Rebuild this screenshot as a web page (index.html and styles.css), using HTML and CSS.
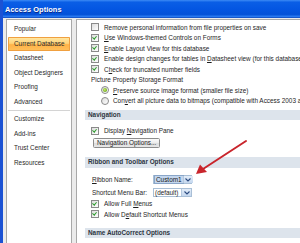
FILE: index.html
```html
<!DOCTYPE html>
<html>
<head>
<meta charset="utf-8">
<link rel="stylesheet" href="styles.css">
</head>
<body>
<div class="window">
  <div class="titlebar"><span class="title">Access Options</span></div>
  <div class="frame">
    <div class="nav">
      <div class="nav-item">Popular</div>
      <div class="nav-item selected">Current Database</div>
      <div class="nav-item">Datasheet</div>
      <div class="nav-item">Object Designers</div>
      <div class="nav-item">Proofing</div>
      <div class="nav-item">Advanced</div>
      <div class="nav-sep"></div>
      <div class="nav-item">Customize</div>
      <div class="nav-item">Add-ins</div>
      <div class="nav-item">Trust Center</div>
      <div class="nav-item">Resources</div>
    </div>
    <div class="main">
      <div class="group first">
        <div class="row"><span class="cb"></span><span>Remove personal information from file properties on save</span></div>
        <div class="row"><span class="cb on"></span><span><u>U</u>se Windows-themed Controls on Forms</span></div>
        <div class="row"><span class="cb on"></span><span><u>E</u>nable Layout View for this database</span></div>
        <div class="row"><span class="cb on"></span><span>Enable design changes for tables in <u>D</u>atasheet view (for this database)</span></div>
        <div class="row"><span class="cb on"></span><span>C<u>h</u>eck for truncated number fields</span></div>
        <div class="row label">Picture Property Storage Format</div>
        <div class="row radio-row"><span class="rb on"></span><span><u>P</u>reserve source image format (smaller file size)</span></div>
        <div class="row radio-row"><span class="rb"></span><span>Con<u>v</u>ert all picture data to bitmaps (compatible with Access 2003 and earlier)</span></div>
      </div>
      <div class="section-head nav-head">Navigation</div>
      <div class="group">
        <div class="row disp"><span class="cb on"></span><span>Display <u>N</u>avigation Pane</span></div>
        <button class="btn">Navigation Options...</button>
      </div>
      <div class="section-head ribbon-head">Ribbon and Toolbar Options</div>
      <div class="group">
        <div class="field first-field"><span class="field-label"><u>R</u>ibbon Name:</span><span class="combo"><span class="combo-text"><span class="sel">Custom1</span></span><span class="combo-btn"><svg width="6" height="4" viewBox="0 0 6 4"><path d="M0.5 0.5 L3 3 L5.5 0.5" fill="none" stroke="#2b4a80" stroke-width="1.1"/></svg></span></span></div>
        <div class="field"><span class="field-label">Shortcut Menu Bar:</span><span class="combo"><span class="combo-text">(default)</span><span class="combo-btn"><svg width="6" height="4" viewBox="0 0 6 4"><path d="M0.5 0.5 L3 3 L5.5 0.5" fill="none" stroke="#2b4a80" stroke-width="1.1"/></svg></span></span></div>
        <div class="row"><span class="cb on"></span><span>Allow Full <u>M</u>enus</span></div>
        <div class="row"><span class="cb on"></span><span>Allow D<u>e</u>fault Shortcut Menus</span></div>
      </div>
      <div class="section-head auto-head">Name AutoCorrect Options</div>
      <div class="group">
        <div class="row last-row"><span class="cb on"></span></div>
      </div>
    </div>
  </div>
  <svg class="arrow" width="300" height="243" viewBox="0 0 300 243">
    <line x1="246" y1="141" x2="203" y2="169" stroke="#c9252c" stroke-width="2" stroke-linecap="round"/>
    <polygon points="196,174 200,164.5 207,172" fill="#c9252c"/>
  </svg>
</div>
</body>
</html>
```

FILE: styles.css
```css
html, body {
  margin: 0;
  padding: 0;
}
body {
  width: 300px;
  height: 243px;
  overflow: hidden;
  background: #e9e9e9;
  font-family: "Liberation Sans", Arial, sans-serif;
  font-size: 6.4px;
  color: #1e1e1e;
}
.window {
  position: relative;
  width: 300px;
  height: 243px;
  overflow: hidden;
  border-left: 3px solid #1c52d4;
  box-sizing: border-box;
  background: #ebebeb;
}
.titlebar {
  height: 18px;
  display: flex;
  align-items: center;
  padding-left: 2px;
  background: linear-gradient(to bottom, #3d8bf5 0%, #0a5ee6 12%, #0456e2 50%, #0351d8 80%, #2a7af0 92%, #0c45b8 100%);
}
.title {
  color: #ffffff;
  font-weight: bold;
  font-size: 7.4px;
  letter-spacing: 0.05px;
  text-shadow: 0.5px 0.5px 0 #0a2a8a;
}
.frame {
  display: flex;
  gap: 4px;
  padding-top: 1px;
  padding-left: 3px;
  height: 300px;
}
.nav {
  width: 66px;
  flex: none;
  background: #ffffff;
  border: 1px solid #a8a8a8;
  padding: 2px 1px 0 1px;
  box-sizing: border-box;
  height: 260px;
}
.nav-item {
  height: 14.5px;
  line-height: 14.5px;
  padding-left: 6px;
  white-space: nowrap;
  color: #2a2a2a;
}
.nav-item.selected {
  background: linear-gradient(to bottom, #ffe9a8 0%, #ffd47a 45%, #ffb347 55%, #ffc15e 100%);
  box-shadow: inset 0 0 0 1px #f0a040;
  border-radius: 1px;
}
.nav-sep {
  height: 3px;
  background: linear-gradient(#ffffff 0, #ffffff 1px, #d4d4d4 1px, #d4d4d4 2px, #ffffff 2px);
}
.main {
  flex: 1;
  background: #ffffff;
  border-left: 1px solid #a8a8a8;
  border-top: 1px solid #a8a8a8;
  padding-left: 8px;
  padding-top: 2px;
  height: 260px;
  box-sizing: border-box;
  min-width: 0;
  overflow: hidden;
}
.group {
  padding-left: 6px;
}
.row {
  height: 10.5px;
  display: flex;
  align-items: center;
  gap: 5px;
  white-space: nowrap;
}
.row.label {
  gap: 0;
}
.radio-row {
  padding-left: 10px;
  gap: 4px;
}
.last-row {
  margin-top: 2px;
  align-items: flex-start;
  padding-top: 3px;
}
.cb {
  width: 6px;
  height: 6px;
  flex: none;
  border: 1px solid #8a8a8a;
  background: linear-gradient(135deg, #dcdcdc, #ffffff);
  position: relative;
}
.cb.on::after {
  content: "";
  position: absolute;
  left: 1.3px;
  top: 0.2px;
  width: 1.6px;
  height: 3.2px;
  border-right: 1.2px solid #2a9a2a;
  border-bottom: 1.2px solid #2a9a2a;
  transform: rotate(40deg);
}
.rb {
  width: 6px;
  height: 6px;
  flex: none;
  border: 1px solid #8a8a8a;
  border-radius: 50%;
  background: linear-gradient(135deg, #dcdcdc, #ffffff);
  position: relative;
}
.rb.on::after {
  content: "";
  position: absolute;
  left: 1.2px;
  top: 1.2px;
  width: 3.6px;
  height: 3.6px;
  border-radius: 50%;
  background: radial-gradient(circle at 40% 40%, #c6e86a, #5a9a16);
}
.section-head {
  margin-right: -20px;
  background: #dde4ec;
  font-weight: bold;
  color: #2c3440;
  height: 10.5px;
  line-height: 10.5px;
  padding-left: 3px;
  white-space: nowrap;
}
.nav-head {
  margin-top: 3.5px;
}
.ribbon-head {
  margin-top: 9.5px;
}
.auto-head {
  margin-top: 8px;
}
.disp {
  margin-top: 5.5px;
}
.btn {
  display: block;
  margin: 1.5px 0 0 2px;
  height: 10px;
  padding: 0 3px;
  font-family: "Liberation Sans", Arial, sans-serif;
  font-size: 6.4px;
  line-height: 8px;
  color: #1e1e1e;
  border: 1px solid #8c8c8c;
  border-radius: 1.5px;
  background: linear-gradient(to bottom, #fafafa 0%, #ececec 50%, #dcdcdc 51%, #e6e6e6 100%);
}
.field {
  height: 12px;
  display: flex;
  align-items: center;
  white-space: nowrap;
  margin-top: 1px;
}
.first-field {
  margin-top: 6px;
}
.field-label {
  width: 61px;
  flex: none;
  padding-left: 1px;
}
.combo {
  display: flex;
  height: 9px;
  width: 39px;
  box-sizing: border-box;
  border: 1px solid #a9bfd6;
  background: #ffffff;
}
.combo-text {
  flex: 1;
  display: flex;
  align-items: center;
  padding-left: 1px;
  line-height: 7px;
}
.sel {
  background: #c3d6ee;
  outline: 0.5px solid #8aa6c8;
  padding: 0 1px;
  color: #1a1a1a;
}
.combo-btn {
  width: 9px;
  flex: none;
  display: flex;
  align-items: center;
  justify-content: center;
  background: linear-gradient(to bottom, #e2ecf8, #c5d8ef);
  border-left: 1px solid #b4c8de;
}
.arrow {
  position: absolute;
  left: -3px;
  top: 0;
  pointer-events: none;
}
```
